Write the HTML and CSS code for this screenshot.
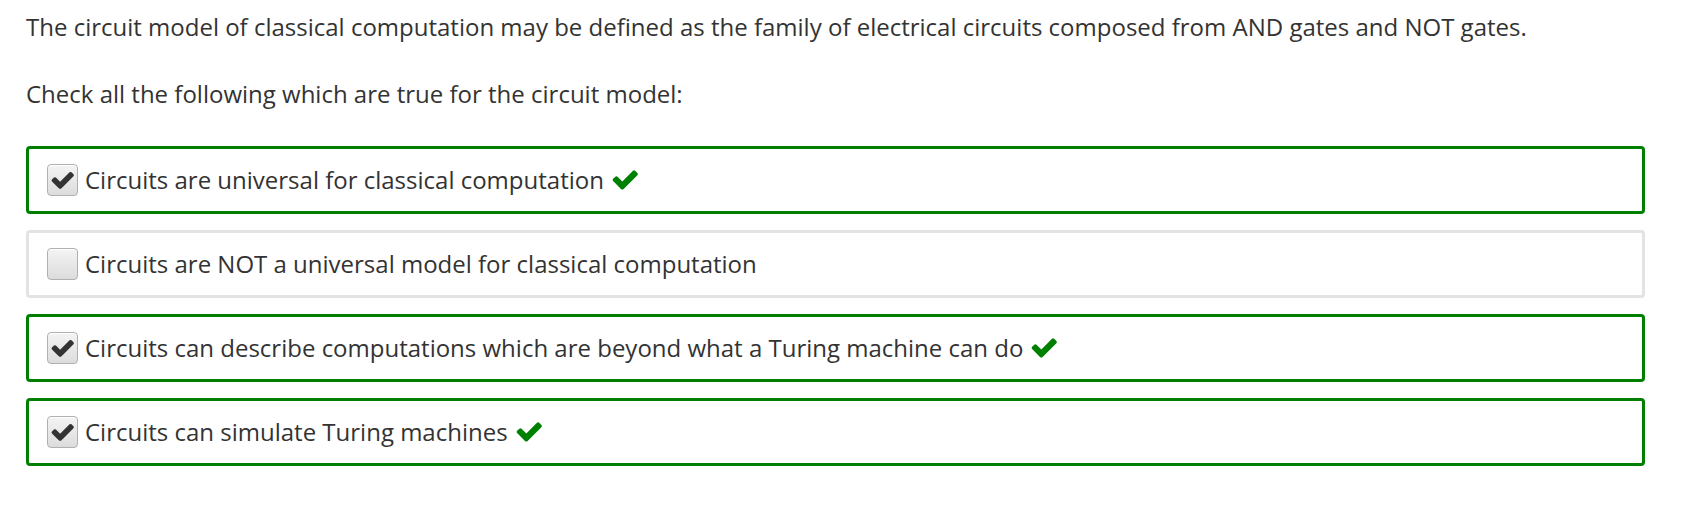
FILE: index.html
```html
<!DOCTYPE html>
<html>
<head>
<meta charset="utf-8">
<link rel="stylesheet" href="styles.css">
</head>
<body>
<div class="question">
  <p class="prompt">The circuit model of classical computation may be defined as the family of electrical circuits composed from AND gates and NOT gates.</p>
  <p class="prompt">Check all the following which are true for the circuit model:</p>
  <div class="options">
    <label class="option correct">
      <span class="box checked"><svg viewBox="80 320 1600 1220"><path d="M1671 566q0 40-28 68l-724 724-136 136q-28 28-68 28t-68-28l-136-136-362-362q-28-28-28-68t28-68l136-136q28-28 68-28t68 28l294 295 656-657q28-28 68-28t68 28l136 136q28 28 28 68z"/></svg></span>
      <span class="label">Circuits are universal for classical computation</span>
      <svg class="mark" viewBox="80 320 1600 1220"><path d="M1671 566q0 40-28 68l-724 724-136 136q-28 28-68 28t-68-28l-136-136-362-362q-28-28-28-68t28-68l136-136q28-28 68-28t68 28l294 295 656-657q28-28 68-28t68 28l136 136q28 28 28 68z"/></svg>
    </label>
    <label class="option">
      <span class="box"></span>
      <span class="label">Circuits are NOT a universal model for classical computation</span>
    </label>
    <label class="option correct">
      <span class="box checked"><svg viewBox="80 320 1600 1220"><path d="M1671 566q0 40-28 68l-724 724-136 136q-28 28-68 28t-68-28l-136-136-362-362q-28-28-28-68t28-68l136-136q28-28 68-28t68 28l294 295 656-657q28-28 68-28t68 28l136 136q28 28 28 68z"/></svg></span>
      <span class="label">Circuits can describe computations which are beyond what a Turing machine can do</span>
      <svg class="mark" viewBox="80 320 1600 1220"><path d="M1671 566q0 40-28 68l-724 724-136 136q-28 28-68 28t-68-28l-136-136-362-362q-28-28-28-68t28-68l136-136q28-28 68-28t68 28l294 295 656-657q28-28 68-28t68 28l136 136q28 28 28 68z"/></svg>
    </label>
    <label class="option correct">
      <span class="box checked"><svg viewBox="80 320 1600 1220"><path d="M1671 566q0 40-28 68l-724 724-136 136q-28 28-68 28t-68-28l-136-136-362-362q-28-28-28-68t28-68l136-136q28-28 68-28t68 28l294 295 656-657q28-28 68-28t68 28l136 136q28 28 28 68z"/></svg></span>
      <span class="label">Circuits can simulate Turing machines</span>
      <svg class="mark" viewBox="80 320 1600 1220"><path d="M1671 566q0 40-28 68l-724 724-136 136q-28 28-68 28t-68-28l-136-136-362-362q-28-28-28-68t28-68l136-136q28-28 68-28t68 28l294 295 656-657q28-28 68-28t68 28l136 136q28 28 28 68z"/></svg>
    </label>
  </div>
</div>
</body>
</html>
```

FILE: styles.css
```css
html, body {
  margin: 0;
  padding: 0;
  background: #ffffff;
}

body {
  font-family: "Open Sans", "Liberation Sans", sans-serif;
  font-size: 24px;
  line-height: 30px;
  color: #333333;
}

.question {
  width: 1619px;
  padding: 11.7px 0 0 26px;
}

.prompt {
  margin: 0 0 37px 0;
}

.options {
  display: flex;
  flex-direction: column;
  gap: 16px;
}

.option {
  display: flex;
  align-items: center;
  height: 62px;
  border: 3px solid #e3e3e3;
  border-radius: 4px;
  padding: 0 18px;
}

.option.correct {
  border-color: #008000;
}

.box {
  flex: none;
  width: 29px;
  height: 30px;
  border: 1px solid #b0b0b0;
  border-radius: 4px;
  background: linear-gradient(#f4f4f4, #dcdcdc);
  display: flex;
  align-items: center;
  justify-content: center;
  margin-right: 7px;
  box-shadow: inset 0 1px 0 #ffffff;
}

.box svg {
  width: 23px;
  height: 19px;
  fill: #333333;
  margin-top: 1px;
}

.mark {
  width: 26px;
  height: 20px;
  fill: #008000;
  margin-left: 8px;
  flex: none;
}
```
